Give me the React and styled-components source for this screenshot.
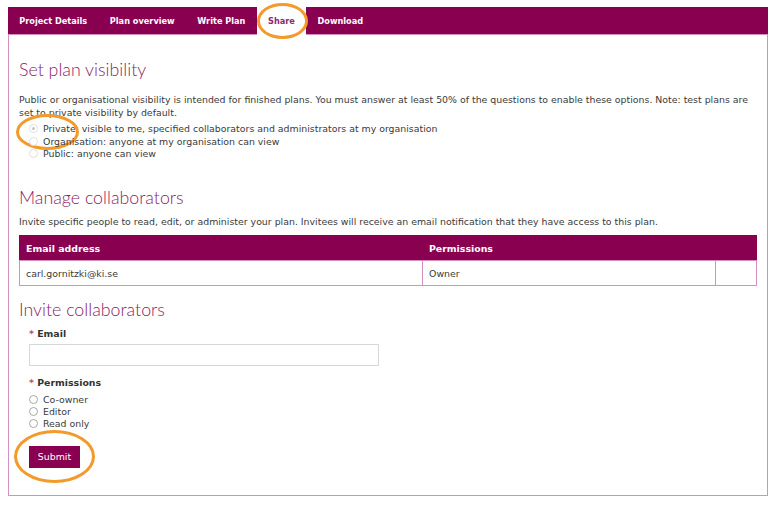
import React from 'react';
import styled, { createGlobalStyle } from 'styled-components';

const purple = '#8a0050';
const pink = '#d590c2';
const orange = '#f39a2b';

const GlobalStyle = createGlobalStyle`
  body {
    margin: 0;
    background: #ffffff;
    font-family: "DejaVu Sans", Verdana, sans-serif;
    color: #333;
  }
`;

const Page = styled.div`
  padding: 7px 12px 0 8px;
`;

const Panel = styled.div`
  border: 1px solid ${pink};
  border-top: none;
  height: 489px;
  box-sizing: border-box;
`;

const TabBar = styled.nav`
  display: flex;
  height: 28px;
  background: ${purple};
  margin: 0 -1px;
  border-bottom: 1px solid ${pink};
  box-sizing: border-box;
`;

const Tab = styled.div`
  position: relative;
  display: flex;
  align-items: center;
  padding: 0 11.3px;
  font-size: 8.2px;
  font-weight: bold;
  color: ${p => (p.$active ? '#8b2a72' : '#fff')};
  background: ${p => (p.$active ? '#fff' : 'transparent')};
  margin-bottom: ${p => (p.$active ? '-1px' : '0')};
`;

const Ring = styled.span`
  position: absolute;
  box-sizing: border-box;
  border: 3.5px solid ${orange};
  border-radius: 50%;
  pointer-events: none;
`;

const Content = styled.div`
  padding: 0 10px;
`;

const Heading = styled.h2`
  margin: ${p => p.$top || '0'} 0 0;
  font-family: Lato, "Open Sans", sans-serif;
  font-weight: 300;
  font-size: 17.8px;
  line-height: 22px;
  color: #8b1c5f;
`;

const Text = styled.p`
  margin: ${p => p.$margin || '0'};
  font-size: 9.4px;
  line-height: 13px;
  color: #3a3a3a;
`;

const RadioList = styled.div`
  display: flex;
  flex-direction: column;
  margin: ${p => p.$margin || '0'};
`;

const RadioRow = styled.label`
  position: relative;
  display: flex;
  align-items: center;
  gap: 5px;
  height: ${p => p.$h || '12.5px'};
  font-size: 9.4px;
  color: #3a3a3a;
`;

const Radio = styled.span`
  flex: none;
  width: 9px;
  height: 9px;
  border-radius: 50%;
  border: 1px solid ${p => (p.$disabled ? '#e0e0e0' : '#a8a8a8')};
  background: #fff;
  margin-left: ${p => p.$indent || '0'};
  box-sizing: border-box;
  display: flex;
  align-items: center;
  justify-content: center;

  &::after {
    content: '';
    display: ${p => (p.$checked ? 'block' : 'none')};
    width: 3px;
    height: 3px;
    border-radius: 50%;
    background: #c4c4c4;
  }
`;

const Table = styled.table`
  width: 100%;
  border-collapse: collapse;
  margin-top: 7.5px;
  font-size: 9.4px;
`;

const Th = styled.th`
  background: ${purple};
  color: #fff;
  text-align: left;
  font-weight: bold;
  height: 24px;
  padding: 0 6px;
  border: 1px solid ${purple};
  border-bottom-color: ${pink};
`;

const Td = styled.td`
  height: 24px;
  padding: 0 6px;
  border: 1px solid ${pink};
  color: #3a3a3a;
`;

const Form = styled.div`
  padding-left: 10px;
`;

const Label = styled.div`
  margin-top: ${p => p.$top || '0'};
  font-size: 9.4px;
  font-weight: bold;
  color: #333;
  line-height: 12px;

  &::before {
    content: '* ';
    color: #c24a70;
  }
`;

const Input = styled.div`
  width: 350px;
  height: 22px;
  margin-top: 4px;
  border: 1px solid #d8d8d8;
  box-sizing: border-box;
`;

const SubmitWrap = styled.div`
  position: relative;
  display: inline-block;
  margin-top: 16.5px;
`;

const Submit = styled.button`
  display: block;
  width: 51px;
  height: 22px;
  padding: 0;
  border: none;
  background: ${purple};
  color: #fff;
  font-family: "DejaVu Sans", Verdana, sans-serif;
  font-size: 9.4px;
`;

const tabs = ['Project Details', 'Plan overview', 'Write Plan', 'Share', 'Download'];

export default function App() {
  return (
    <Page>
      <GlobalStyle />
      <Panel>
        <TabBar>
          {tabs.map(t => (
            <Tab key={t} $active={t === 'Share'}>
              {t}
              {t === 'Share' && <Ring style={{ left: 0, right: -2, top: -4, bottom: -4 }} />}
            </Tab>
          ))}
        </TabBar>
        <Content>
          <Heading $top="23px">Set plan visibility</Heading>
          <Text $margin="12.5px 0 0">
            Public or organisational visibility is intended for finished plans. You must answer at least 50% of the questions to enable these options. Note: test plans are set to private visibility by default.
          </Text>
          <RadioList $margin="4px 0 0">
            <RadioRow>
              <Radio $disabled $checked $indent="10px" />
              Private: visible to me, specified collaborators and administrators at my organisation
              <Ring style={{ left: -3, top: -9, width: 63, height: 36 }} />
            </RadioRow>
            <RadioRow>
              <Radio $disabled $indent="10px" />
              Organisation: anyone at my organisation can view
            </RadioRow>
            <RadioRow>
              <Radio $disabled $indent="10px" />
              Public: anyone can view
            </RadioRow>
          </RadioList>

          <Heading $top="26px">Manage collaborators</Heading>
          <Text $margin="6.5px 0 0">
            Invite specific people to read, edit, or administer your plan. Invitees will receive an email notification that they have access to this plan.
          </Text>
          <Table>
            <thead>
              <tr>
                <Th style={{ width: 390 }}>Email address</Th>
                <Th style={{ width: 280 }}>Permissions</Th>
                <Th />
              </tr>
            </thead>
            <tbody>
              <tr>
                <Td>carl.gornitzki@ki.se</Td>
                <Td>Owner</Td>
                <Td />
              </tr>
            </tbody>
          </Table>

          <Heading $top="12px">Invite collaborators</Heading>
          <Form>
            <Label $top="8px">Email</Label>
            <Input />
            <Label $top="11px">Permissions</Label>
            <RadioList $margin="4px 0 0">
              <RadioRow $h="12px">
                <Radio />
                Co-owner
              </RadioRow>
              <RadioRow $h="12px">
                <Radio />
                Editor
              </RadioRow>
              <RadioRow $h="12px">
                <Radio />
                Read only
              </RadioRow>
            </RadioList>
            <SubmitWrap>
              <Submit>Submit</Submit>
              <Ring style={{ left: -15, right: -15, top: -16, bottom: -15 }} />
            </SubmitWrap>
          </Form>
        </Content>
      </Panel>
    </Page>
  );
}
